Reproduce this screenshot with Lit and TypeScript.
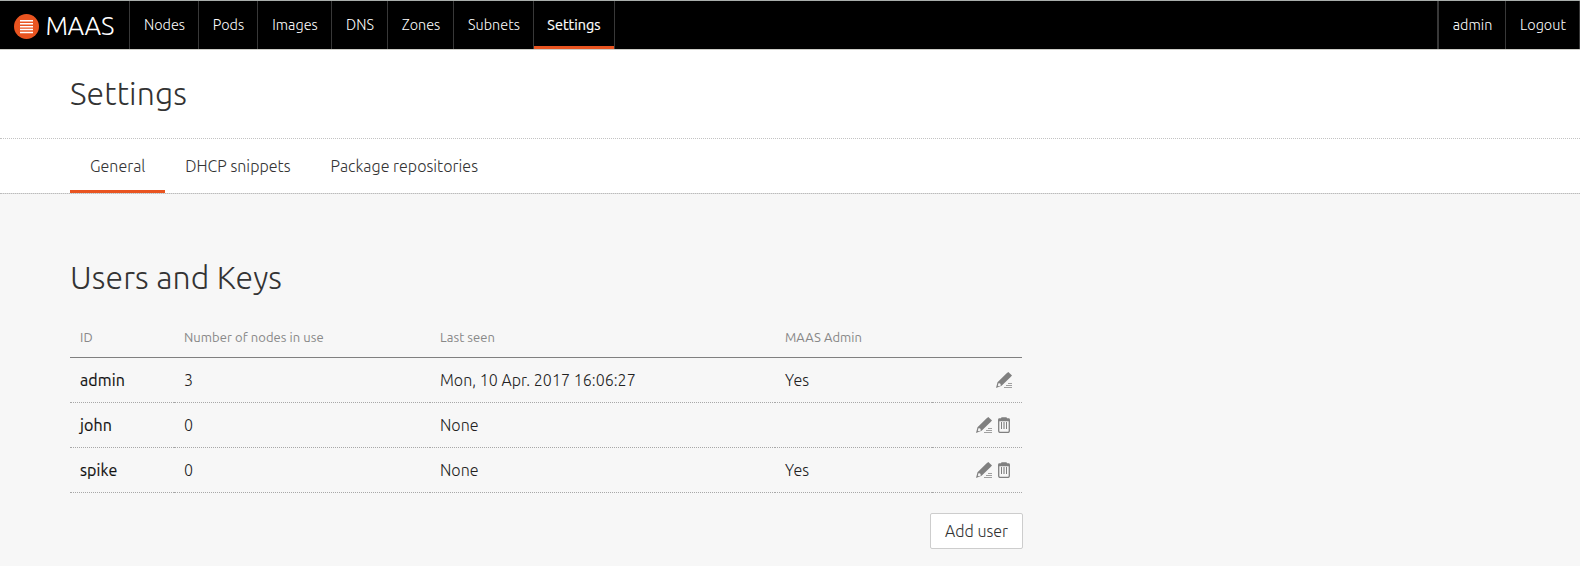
import { LitElement, html, css } from "lit";
import { customElement } from "lit/decorators.js";

const pencil = html`<svg class="icon" width="16" height="16" viewBox="0 0 16 16">
  <path fill="#808080" fill-rule="evenodd" d="M12.3 0 L16 3.5 L14.4 5.3 L5.6 13.8 L0 16 L1.5 10.2 L10.4 1.6Z M2.7 11 L1.8 13.6 L2.6 14.3 L4.9 13.4 L4.4 11.7Z"/>
  <path stroke="#a0a0a0" stroke-width="1" d="M12 11.5H16M10 13.5H16M8 15.5H16"/>
</svg>`;

const bin = html`<svg class="icon" width="16" height="16" viewBox="0 0 16 16">
  <path fill="#808080" d="M5.5 0.2H10.5L11 1.2H13Q14 1.4 14 3V4.2H2V3Q2 1.4 3 1.2H5Z"/>
  <path fill="none" stroke="#808080" stroke-width="1.3" d="M2.7 4V14Q2.7 15.4 4 15.4H12Q13.3 15.4 13.3 14V4"/>
  <path stroke="#808080" stroke-width="1" d="M5.5 5V12M10.5 5V12"/>
  <path stroke="#b4b4b4" stroke-width="2" d="M8 5V12"/>
</svg>`;

interface User { id: string; nodes: string; seen: string; admin: boolean; removable: boolean; }

@customElement("app-root")
class AppRoot extends LitElement {
  nav: [string, number][] = [
    ["Nodes", 69], ["Pods", 59], ["Images", 74], ["DNS", 56],
    ["Zones", 66], ["Subnets", 80], ["Settings", 81],
  ];
  users: User[] = [
    { id: "admin", nodes: "3", seen: "Mon, 10 Apr. 2017 16:06:27", admin: true, removable: false },
    { id: "john", nodes: "0", seen: "None", admin: false, removable: true },
    { id: "spike", nodes: "0", seen: "None", admin: true, removable: true },
  ];

  static styles = css`
    :host {
      display: flex; flex-direction: column; box-sizing: border-box;
      width: 1580px; height: 566px; overflow: hidden; background: #f7f7f7;
      font-family: Ubuntu, "Open Sans", "Noto Sans", sans-serif;
      font-weight: 300; font-size: 16px; letter-spacing: 0.03px; color: #222;
    }
    * { box-sizing: border-box; }
    .bar { display: flex; height: 50px; flex: none; background: #000; color: #fff; border-top: 1px solid #a9aeab; border-bottom: 1px solid #cdcdc8; font-size: 14.4px; }
    .brand { display: flex; width: 129px; padding-left: 14px; align-items: center; }
    .brand svg { flex: none; margin-top: 3px; }
    .name { font-size: 26px; line-height: 48px; margin-left: 6.5px; padding-top: 2px; letter-spacing: -0.45px; }
    .item { display: flex; justify-content: center; padding-left: 1px; border-right: 1px solid #383838; line-height: 48px; height: 48px; white-space: nowrap; }
    .n69 { width: 70px; border-left: 1px solid #383838; } .n59 { width: 59px; } .n74 { width: 74px; } .n56 { width: 56px; }
    .n66 { width: 66px; } .n80 { width: 80px; } .n81 { width: 81px; } .n68 { width: 69px; border-left: 2px solid #383838; }
    .item.on { font-weight: 400; padding-left: 0; -webkit-text-stroke: 0.2px #fff; background: linear-gradient(#e95420, #e95420) 0 100% / 100% 3px no-repeat; }
    .spring { flex: 1; }
    .head { flex: none; height: 89px; background: #fff; border-bottom: 1px dotted #c3c3c3; padding: 20px 0 0 70px; }
    h1, h2 { margin: 0; font-weight: 300; font-size: 32px; line-height: 46px; letter-spacing: 0.1px; color: #333; }
    .tabs { flex: none; display: flex; height: 55px; background: linear-gradient(#fff, #fff) padding-box, linear-gradient(#dcdcdc, #dcdcdc) border-box; border-bottom: 1px dotted #bcbcbc; padding-left: 70px; color: #333; }
    .tab { height: 54px; line-height: 55px; padding: 0 20px; letter-spacing: 0.03px; }
    .tab.on { width: 95.2px; border-bottom: 3px solid #e95420; }
    .main { padding: 60px 0 0 70px; width: 1023px; }
    table { border-collapse: separate; border-spacing: 0; table-layout: fixed; width: 952px; margin-top: 20px; }
    th { height: 38px; padding: 0 10px 2px; text-align: left; font-weight: 400; font-size: 13px; letter-spacing: 0.06px; color: #888; border-bottom: 1px solid #808080; line-height: 33px; }
    td { height: 45px; padding: 0 10px; line-height: 44px; border-bottom: 1px dotted #a8a8a8; color: #222; }
    td.id { font-weight: 400; -webkit-text-stroke: 0.15px #111; letter-spacing: 0.1px; color: #111; }
    .c1 { width: 104px; } .c2 { width: 256px; } .c3 { width: 345px; } .c4 { width: 157px; } .c5 { width: 90px; }
    .acts { display: flex; justify-content: flex-end; gap: 4px; align-items: center; height: 44px; }
    .icon { display: block; flex: none; }
    .foot { display: flex; justify-content: flex-end; padding-top: 20px; }
    button { width: 93px; height: 36px; padding: 0; border: 1px solid #cdcdcd; border-radius: 2px; background: #fff; font: inherit; color: #333; line-height: 34px; }
  `;

  render() {
    return html`
      <div class="bar">
        <div class="brand">
          <svg width="25" height="25" viewBox="0 0 25 25"><circle cx="12.5" cy="12.5" r="12.5" fill="#e95420"/><path stroke="#fff" stroke-width="1.5" d="M6 6.8H19M6 9.8H19M6 12.7H19M6 15.6H19M6 18.5H19"/></svg>
          <span class="name">MAAS</span>
        </div>
        ${this.nav.map(([t, c]) => html`<div class="item n${c} ${t === "Settings" ? "on" : ""}">${t}</div>`)}
        <div class="spring"></div>
        <div class="item n68">admin</div>
        <div class="item n74">Logout</div>
      </div>
      <div class="head"><h1>Settings</h1></div>
      <div class="tabs">
        <div class="tab on">General</div>
        <div class="tab">DHCP snippets</div>
        <div class="tab">Package repositories</div>
      </div>
      <div class="main">
        <h2>Users and Keys</h2>
        <table>
          <tr>
            <th class="c1">ID</th><th class="c2">Number of nodes in use</th>
            <th class="c3">Last seen</th><th class="c4">MAAS Admin</th><th class="c5"></th>
          </tr>
          ${this.users.map((u) => html`<tr>
            <td class="id">${u.id}</td>
            <td>${u.nodes}</td>
            <td>${u.seen}</td>
            <td>${u.admin ? "Yes" : ""}</td>
            <td><div class="acts">${pencil}${u.removable ? bin : ""}</div></td>
          </tr>`)}
        </table>
        <div class="foot"><button>Add user</button></div>
      </div>`;
  }
}
